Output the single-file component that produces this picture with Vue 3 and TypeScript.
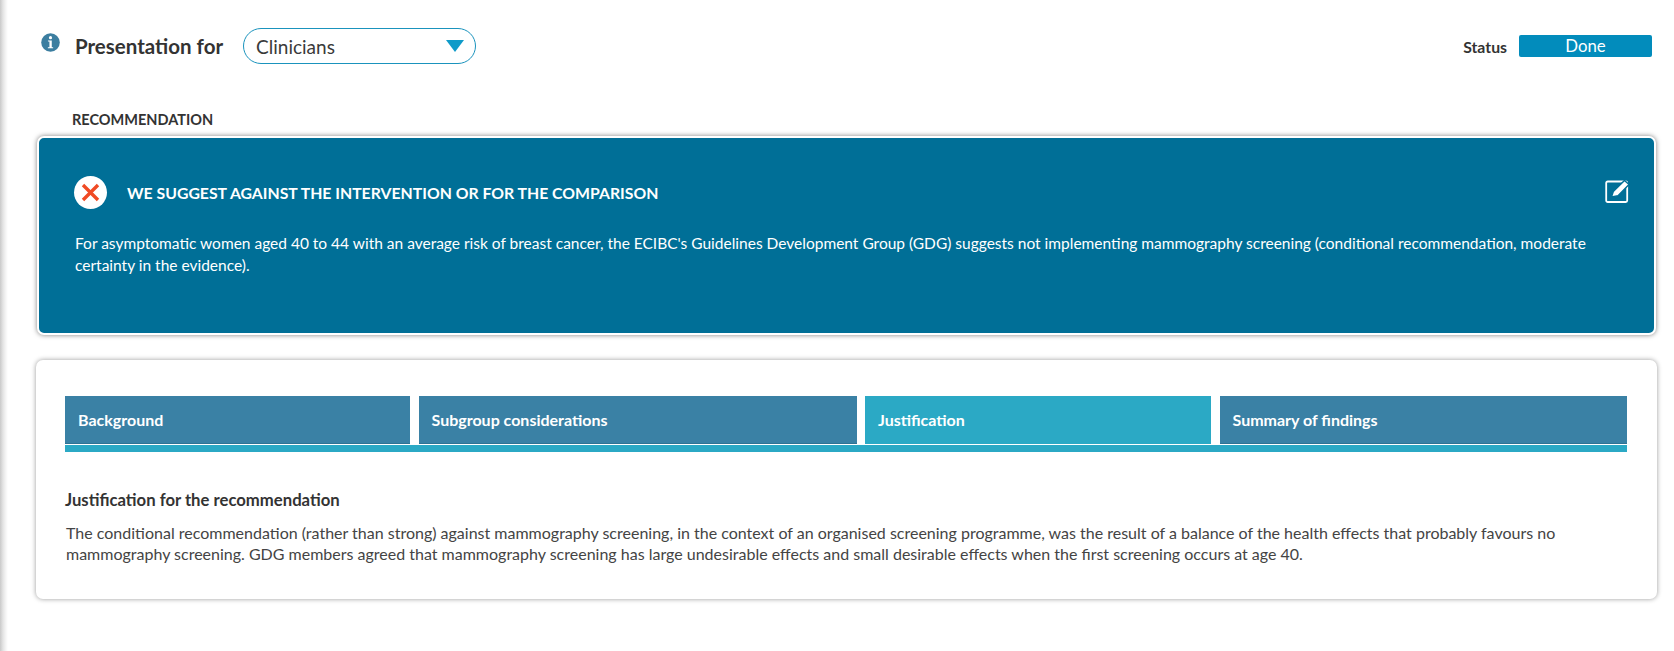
<script setup lang="ts">
const tabs: { label: string; active?: boolean }[] = [
  { label: 'Background' },
  { label: 'Subgroup considerations' },
  { label: 'Justification', active: true },
  { label: 'Summary of findings' },
]
</script>

<template>
  <div class="page">
    <header class="topbar">
      <div class="presentation">
        <svg class="info" width="19" height="19" viewBox="0 0 18 18">
          <circle cx="9" cy="9" r="8.8" fill="#3c7ea0" />
          <circle cx="9" cy="4.4" r="1.5" fill="#fff" />
          <path d="M6.600 7h3.600v6.400h1.300v1.100H6.500v-1.100h1.500V8.100H6.600z" fill="#fff" />
        </svg>
        <span class="pres-label">Presentation for</span>
        <div class="select">
          <span>Clinicians</span>
          <svg width="18" height="12" viewBox="0 0 18 12"><path d="M0 0h18L9 12z" fill="#0f9bc9" /></svg>
        </div>
      </div>
      <div class="status">
        <span class="status-label">Status</span>
        <span class="status-value">Done</span>
      </div>
    </header>

    <h2 class="section-label">RECOMMENDATION</h2>

    <section class="rec">
      <div class="rec-head">
        <span class="x-badge">
          <svg width="21" height="21" viewBox="0 0 21 21">
            <path d="M3 3l15 15M18 3L3 18" stroke="#f04a24" stroke-width="3.400" fill="none" />
          </svg>
        </span>
        <h3>WE SUGGEST AGAINST THE INTERVENTION OR FOR THE COMPARISON</h3>
        <svg class="edit" width="25" height="25" viewBox="0 0 25 25">
          <rect x="1.200" y="3.500" width="21" height="20.500" rx="1.500" fill="none" stroke="#fff" stroke-width="1.800" />
          <path d="M6.500 19l1.800-5.500L19.500 2.500l4.500 4-11 11.200z" fill="#fff" stroke="#006f97" stroke-width="1.400" />
        </svg>
      </div>
      <p>For asymptomatic women aged 40 to 44 with an average risk of breast cancer, the ECIBC's Guidelines Development Group (GDG) suggests not implementing mammography screening (conditional recommendation, moderate certainty in the evidence).</p>
    </section>

    <section class="details">
      <nav class="tabs">
        <div v-for="t in tabs" :key="t.label" class="tab" :class="{ active: t.active }">{{ t.label }}</div>
      </nav>
      <div class="tab-rule"></div>
      <h4>Justification for the recommendation</h4>
      <p>The conditional recommendation (rather than strong) against mammography screening, in the context of an organised screening programme, was the result of a balance of the health effects that probably favours no mammography screening. GDG members agreed that mammography screening has large undesirable effects and small desirable effects when the first screening occurs at age 40.</p>
    </section>
  </div>
</template>

<style>
html, body { margin: 0; background: #fff; }
</style>

<style scoped>
.page {
  box-sizing: border-box;
  width: 1674px;
  height: 651px;
  padding: 28px 17px 0 36px;
  font-family: "Lato", "Open Sans", sans-serif;
  color: #333;
  background: linear-gradient(to right, #c9c9c9 0, #e4e4e4 3px, #f6f6f6 6px, #fff 8px);
  overflow: hidden;
}
.topbar {
  display: flex;
  justify-content: space-between;
  align-items: center;
  height: 36px;
}
.presentation { display: flex; align-items: center; }
.info { margin: -7px 0 0 5px; }
.pres-label {
  margin-left: 15px;
  font-size: 20.500px;
  font-weight: 700;
  color: #333;
}
.select {
  box-sizing: border-box;
  display: flex;
  align-items: center;
  justify-content: space-between;
  width: 233px;
  height: 36px;
  margin-left: 20px;
  padding: 0 11px 0 12px;
  border: 1px solid #1a93bd;
  border-radius: 18px;
  font-size: 19px;
  color: #3a3a3a;
}
.status { display: flex; align-items: center; margin-right: 5px; }
.status-label { font-size: 15.800px; font-weight: 700; }
.status-value {
  width: 133px;
  height: 22px;
  margin-left: 12px;
  border-radius: 2px;
  background: #028cbc;
  color: #fff;
  font-size: 16.800px;
  line-height: 22px;
  text-align: center;
}
.section-label {
  margin: 47px 0 0 36px;
  height: 18px;
  font-size: 14.500px;
  line-height: 18px;
  font-weight: 700;
  color: #333;
}
.rec {
  box-sizing: border-box;
  height: 199px;
  margin: 7px 1px 0 1px;
  padding: 38px 24px 0 35px;
  border: 2px solid #fff;
  border-radius: 7px;
  background: #006f97;
  color: #fff;
  box-shadow: 0 0 5px rgba(0, 0, 0, .5);
}
.rec-head { display: flex; align-items: center; height: 32px; }
.x-badge {
  display: flex;
  align-items: center;
  justify-content: center;
  width: 33px;
  height: 33px;
  border-radius: 50%;
  background: #fff;
}
.rec-head h3 {
  flex: 1;
  margin: 0 0 0 20px;
  font-size: 15.800px;
  font-weight: 700;
}
.edit { margin-top: -4px; }
.rec p {
  margin: 24px 0 0 1px;
  font-size: 15.500px;
  line-height: 22.400px;
}
.details {
  box-sizing: border-box;
  height: 239px;
  margin: 25px 0 0 0;
  padding: 36px 30px 0 29px;
  background: #fff;
  border-radius: 7px;
  box-shadow: 0 0 5px rgba(0, 0, 0, .4);
}
.tabs {
  display: grid;
  grid-template-columns: 345px 438px 346px 407px;
  column-gap: 8.500px;
}
.tab {
  box-sizing: border-box;
  height: 48px;
  padding-left: 13px;
  background: #3a81a5;
  border-bottom: 1px solid #2f7394;
  color: #fff;
  font-size: 16px;
  line-height: 48px;
  font-weight: 700;
}
.tab.active { background: #2ba9c5; border-bottom-color: #2ba9c5; }
.tab-rule { height: 7px; margin-top: 1px; background: #2ba9c5; }
.details h4 {
  margin: 38px 0 0 0;
  font-size: 16.700px;
  line-height: 20px;
  font-weight: 700;
  color: #333;
}
.details p {
  margin: 12px 0 0 1px;
  font-size: 16px;
  line-height: 21px;
  color: #444;
}
</style>
